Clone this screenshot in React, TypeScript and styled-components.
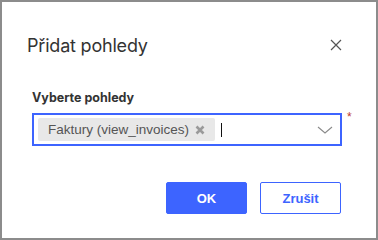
import styled, { createGlobalStyle } from "styled-components";

const GlobalStyle = createGlobalStyle`
  html, body {
    margin: 0;
    padding: 0;
    background: #ffffff;
  }
  * {
    box-sizing: border-box;
  }
`;

const App = () => {
  return (
    <>
      <GlobalStyle />
      <Dialog>
        <Header>
          <Title>Přidat pohledy</Title>
          <Close aria-label="close">
            <svg width="12" height="12" viewBox="0 0 12 12">
              <path d="M1 1L11 11M11 1L1 11" stroke="#555" strokeWidth="1.2" />
            </svg>
          </Close>
        </Header>

        <Body>
          <Label>Vyberte pohledy</Label>
          <FieldRow>
            <Select>
              <Tag>
                Faktury (view_invoices)
                <TagRemove>
                  <svg width="10" height="10" viewBox="0 0 10 10">
                    <path d="M1.5 1.5L8.5 8.5M8.5 1.5L1.5 8.5" stroke="#9a9a9a" strokeWidth="2.6" />
                  </svg>
                </TagRemove>
              </Tag>
              <Caret />
              <Chevron>
                <svg width="16" height="8" viewBox="0 0 16 8">
                  <path d="M1 1L8 7L15 1" fill="none" stroke="#8a8a8a" strokeWidth="1.1" />
                </svg>
              </Chevron>
            </Select>
            <Required>*</Required>
          </FieldRow>
        </Body>

        <Footer>
          <Button $primary>OK</Button>
          <Button>Zrušit</Button>
        </Footer>
      </Dialog>
    </>
  );
};

export default App;

const Dialog = styled.div`
  width: 378px;
  height: 240px;
  border: 2px solid #8c8c8c;
  background: #fff;
  display: flex;
  flex-direction: column;
  font-family: "Liberation Sans", Arial, sans-serif;
`;

const Header = styled.div`
  display: flex;
  align-items: center;
  justify-content: space-between;
  padding: 30px 34px 0 25px;
  height: 56px;
`;

const Title = styled.div`
  font-family: Inter, "Noto Sans", sans-serif;
  font-size: 18px;
  font-weight: 400;
  color: #333;
  letter-spacing: -0.2px;
`;

const Close = styled.div`
  display: flex;
  align-items: center;
  justify-content: center;
  width: 12px;
  height: 12px;
`;

const Body = styled.div`
  padding: 32px 0 0 30px;
`;

const Label = styled.div`
  font-family: Inter, "Noto Sans", sans-serif;
  font-size: 12.5px;
  font-weight: 700;
  color: #333;
  margin-bottom: 8px;
`;

const FieldRow = styled.div`
  display: flex;
  align-items: flex-start;
`;

const Select = styled.div`
  width: 310px;
  height: 33px;
  border: 2px solid #3d64ff;
  display: flex;
  align-items: center;
  padding: 0 4px;
`;

const Tag = styled.div`
  height: 23px;
  background: #e8e8e8;
  border-radius: 2px;
  display: flex;
  align-items: center;
  padding: 0 10px;
  gap: 6px;
  font-size: 13.5px;
  color: #555;
`;

const TagRemove = styled.span`
  display: flex;
  align-items: center;
`;

const Caret = styled.span`
  width: 1px;
  height: 14px;
  background: #111;
  margin-left: 6px;
`;

const Chevron = styled.span`
  margin-left: auto;
  margin-right: 3px;
  display: flex;
  align-items: center;
`;

const Required = styled.span`
  color: #c0392b;
  font-size: 12px;
  margin-left: 5px;
  margin-top: -3px;
`;

const Footer = styled.div`
  display: flex;
  justify-content: flex-end;
  gap: 13px;
  padding: 36px 35px 0 0;
`;

const Button = styled.button<{ $primary?: boolean }>`
  width: 81px;
  height: 32px;
  border-radius: 2px;
  border: 1px solid #3d64ff;
  background: ${(p) => (p.$primary ? "#3d64ff" : "#fff")};
  color: ${(p) => (p.$primary ? "#fff" : "#3d64ff")};
  font-family: "Liberation Sans", Arial, sans-serif;
  font-weight: 700;
  font-size: 13px;
  cursor: pointer;
`;
